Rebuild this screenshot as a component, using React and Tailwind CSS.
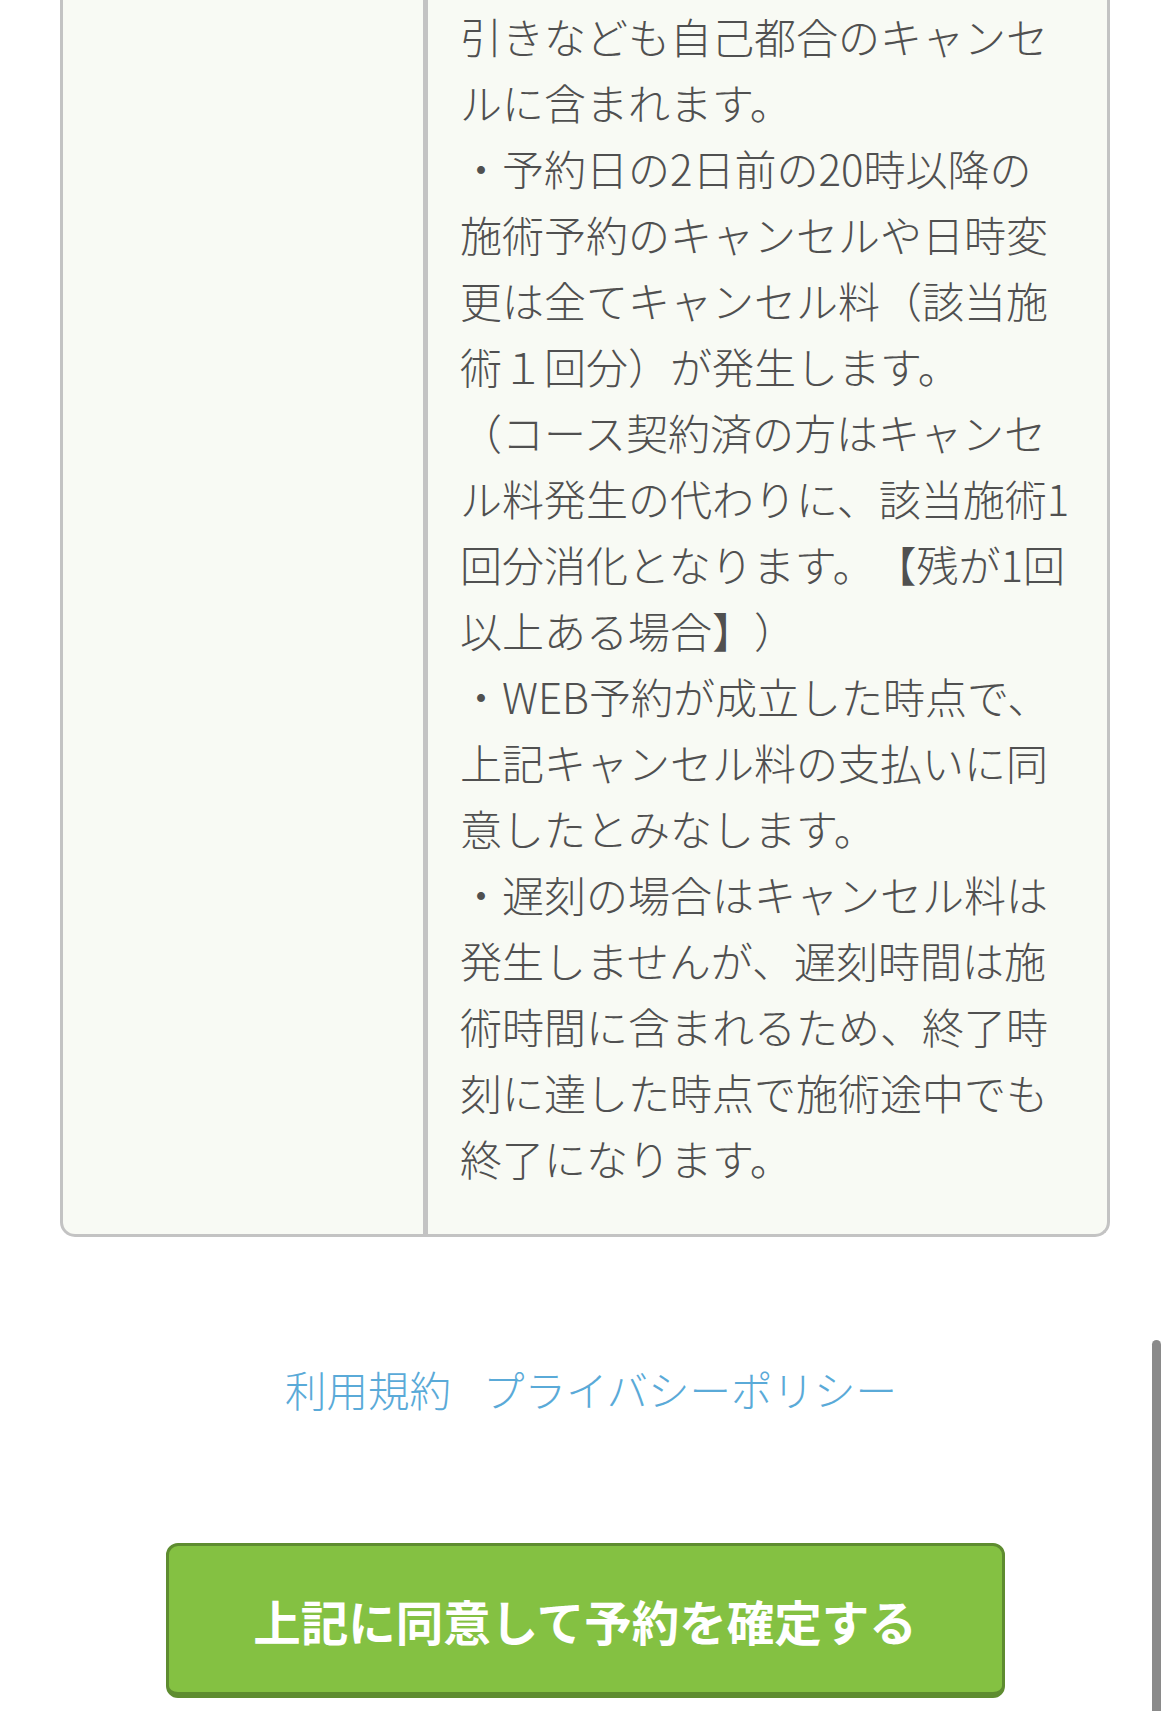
import React from "react";

const lines = [
  "引きなども自己都合のキャンセ",
  "ルに含まれます。",
  "・予約日の2日前の20時以降の",
  "施術予約のキャンセルや日時変",
  "更は全てキャンセル料（該当施",
  "術１回分）が発生します。",
  "（コース契約済の方はキャンセ",
  "ル料発生の代わりに、該当施術1",
  "回分消化となります。【残が1回",
  "以上ある場合】）",
  "・WEB予約が成立した時点で、",
  "上記キャンセル料の支払いに同",
  "意したとみなします。",
  "・遅刻の場合はキャンセル料は",
  "発生しませんが、遅刻時間は施",
  "術時間に含まれるため、終了時",
  "刻に達した時点で施術途中でも",
  "終了になります。",
];

export default function App() {
  return (
    <div
      className="relative w-full min-h-[1711px] overflow-hidden bg-white [text-spacing-trim:space-all]"
      style={{ fontFamily: '"Noto Sans CJK JP", "Noto Sans", sans-serif' }}
    >
      <div className="mx-[60px] flex border-x-[3px] border-b-[3px] border-[#c3c3c3] rounded-b-[15px] bg-[#f8faf4]">
        <div className="w-[365px] shrink-0 border-r-[5px] border-[#c3c3c3]" />
        <div className="flex-1 pl-[32px] pt-[3px] pb-[43px] text-[42px] font-light leading-[66px] text-[#505050]">
          {lines.map((l, i) => (
            <div key={i} className="whitespace-nowrap">
              {l}
            </div>
          ))}
        </div>
      </div>

      <div className="mt-[122px] flex h-[60px] items-center justify-center gap-[32px] pl-[12px] text-[41.5px] font-light leading-[60px] text-[#5aaad8]">
        <span>利用規約</span>
        <span>プライバシーポリシー</span>
      </div>

      <div className="mx-auto mt-[124px] flex h-[155px] w-[839px] items-center justify-center rounded-[12px] border-[3px] border-b-[6px] border-[#5e8c30] bg-[#84c142] pt-[3px] text-[47.5px] font-bold text-white">
        上記に同意して予約を確定する
      </div>

      <div className="absolute left-[1152px] top-[1340px] h-[400px] w-[9px] rounded-full bg-[#8a8a8a]" />
    </div>
  );
}
